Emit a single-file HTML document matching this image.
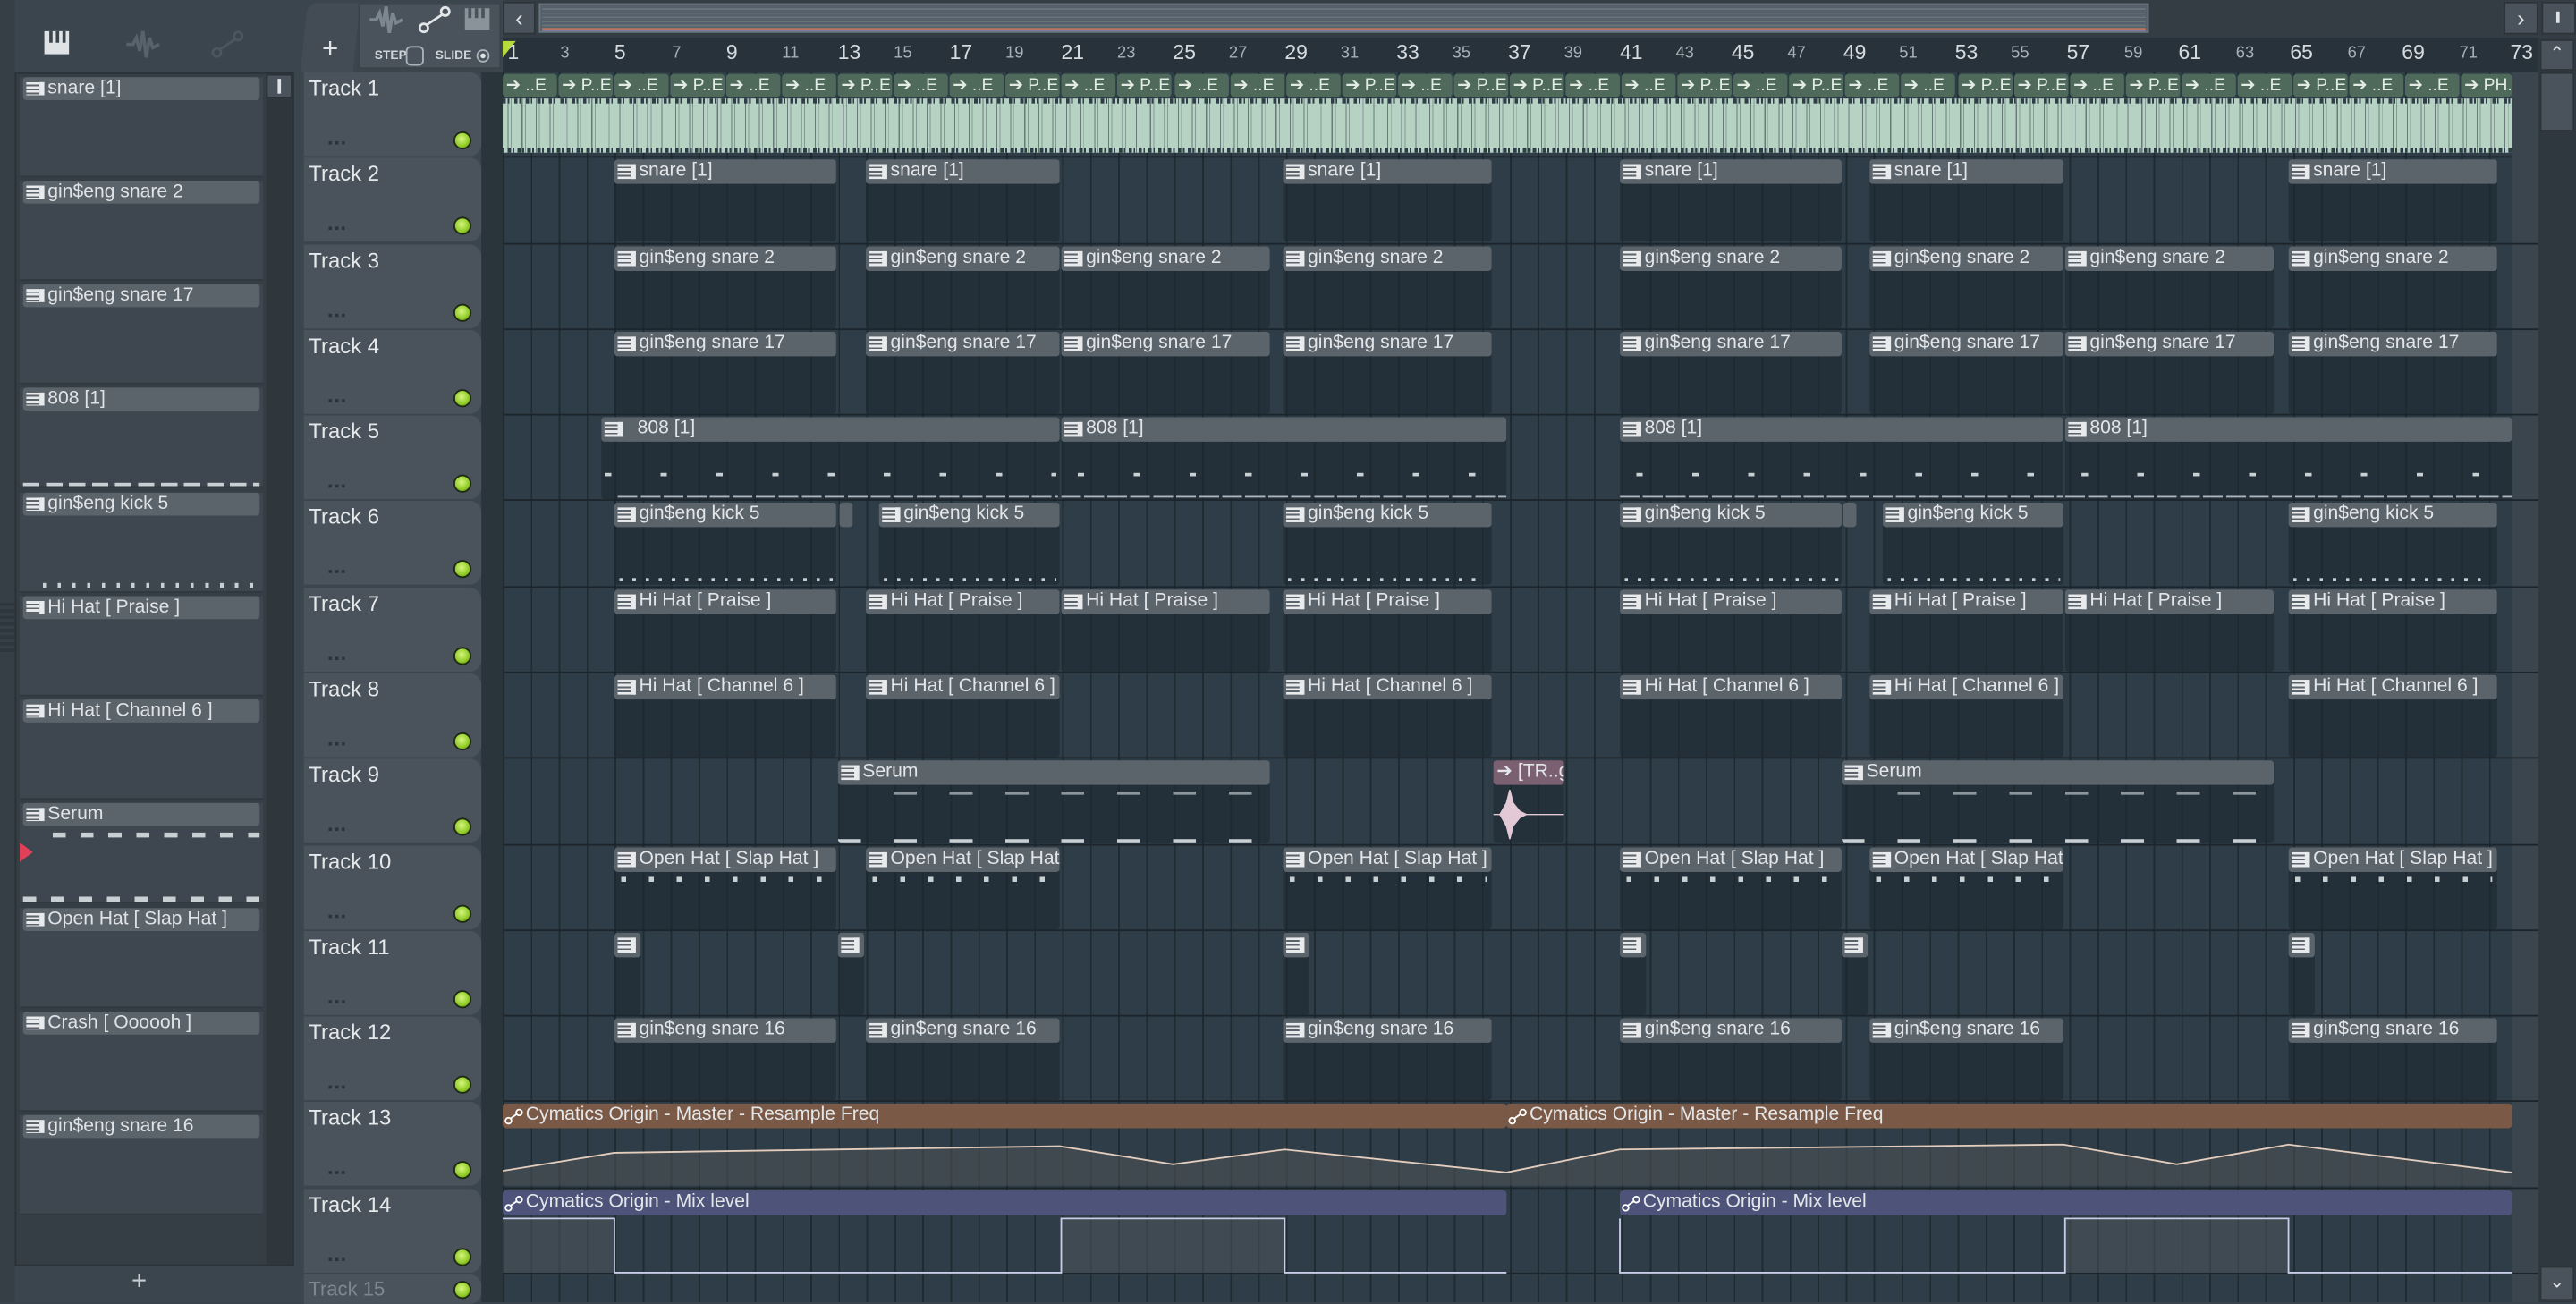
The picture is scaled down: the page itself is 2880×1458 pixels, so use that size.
<!DOCTYPE html>
<html><head><meta charset="utf-8"><style>
*{margin:0;padding:0;box-sizing:border-box}
html,body{width:2880px;height:1456px;overflow:hidden;background:#39434b}
#s{position:absolute;left:0;top:0;width:1568px;height:793px;transform:scale(1.83673,1.83607);transform-origin:0 0;background:#3b454d;font-family:"Liberation Sans Narrow","Liberation Sans",sans-serif;color:#dfe3e6}
.a{position:absolute}
#grid{position:absolute;left:306px;top:44px;width:1239px;height:749px;background-color:#2e3d47;background-image:repeating-linear-gradient(90deg,#1f2a31 0 1px,transparent 1px 17.03px);}
.r{position:absolute;left:306px;width:1239px;height:52.27px;border-bottom:1px solid #1c252b}
.c{position:absolute;top:1px;height:50px;background:rgba(28,38,45,.55);border-radius:2px;overflow:hidden}
.c b{display:block;height:15px;background:#5b636b;border-radius:2px;color:#e3e6e8;font-weight:normal;font-size:11.5px;line-height:15px;padding-left:15px;white-space:nowrap;overflow:hidden;position:relative}
.c b:before{content:"";position:absolute;left:2px;top:3px;width:8px;height:9px;background:#e8eaec;background-image:repeating-linear-gradient(180deg,#e8eaec 0 1.5px,#5b636b 1.5px 2.5px);border-right:3px solid #e8eaec}
.c b.x:before{display:none}
.h{position:absolute;left:185px;width:108px;height:51px;background:#4a535b;border-radius:0 7px 7px 0;font-size:13px;padding:2px 0 0 3px;color:#e6e9eb}
.h i{position:absolute;right:6px;top:36px;width:11px;height:11px;border-radius:50%;background:radial-gradient(circle at 45% 40%,#d8f580,#8fcb25 60%,#4f7a10);border:1px solid #1f2a14}
.h u{position:absolute;left:15px;top:42px;width:12px;height:2px;text-decoration:none;background:repeating-linear-gradient(90deg,#2b333a 0 2px,transparent 2px 4px)}
.it{position:absolute;left:12px;width:148px;height:61px;background:#3e474f;border-bottom:1px solid #30383f}
.it b{display:block;height:14px;background:#5b636b;border-radius:2px;font-weight:normal;font-size:11.5px;line-height:14px;padding-left:15px;white-space:nowrap;overflow:hidden;position:relative;margin:0 2px}
.it b:before{content:"";position:absolute;left:2px;top:3px;width:8px;height:8px;background-image:repeating-linear-gradient(180deg,#e8eaec 0 1.5px,#5b636b 1.5px 2.5px);border-right:3px solid #e8eaec}
.n{position:absolute;top:27px;font-size:10px;color:#a8b1b8}
.n.m{font-size:12.5px;top:25px;color:#d6dbdf}
.sg{position:absolute;top:1px;height:14px;width:33px;background:#4f6a5a;border-radius:2px;font-size:10.5px;line-height:14px;color:#e2ebe5;padding-left:2px;white-space:nowrap;overflow:hidden}
.d{position:absolute;height:2px;background:#c9d0d4}
</style></head><body><div id="s">

<div class="a" style="left:0;top:0;width:9px;height:793px;background:#363f46"></div>
<div class="a" style="left:9px;top:0;width:169px;height:44px;background:#3b454d"></div>
<div class="a" style="left:9px;top:44px;width:170px;height:727px;background:#353e45;border:1px solid #2a3238"></div>
<div class="a" style="left:27px;top:19px;width:15px;height:14px;background:#dfe3e6"></div>
<div class="a" style="left:30px;top:19px;width:2px;height:7px;background:#3b454d"></div>
<div class="a" style="left:34px;top:19px;width:2px;height:7px;background:#3b454d"></div>
<div class="a" style="left:38px;top:19px;width:2px;height:7px;background:#3b454d"></div>
<svg class="a" style="left:76px;top:18px" width="22" height="18"><path d="M1 9 L5 9 L7 5 L9 13 L11 1 L13 17 L15 5 L17 11 L21 9" stroke="#57626b" stroke-width="2" fill="none"/></svg>
<svg class="a" style="left:128px;top:18px" width="22" height="18"><circle cx="4" cy="14" r="2.5" stroke="#4c565e" fill="none" stroke-width="1.5"/><circle cx="17" cy="4" r="2.5" stroke="#4c565e" fill="none" stroke-width="1.5"/><path d="M6 12 L15 6" stroke="#4c565e" stroke-width="1.5"/></svg>
<div class="a" style="left:162px;top:45px;width:16px;height:725px;background:#2f373d"></div>
<div class="a" style="left:162px;top:45px;width:16px;height:15px;background:#4a535b;border:1px solid #2a3137"></div>
<div class="a" style="left:169px;top:48px;width:2px;height:9px;background:#dfe3e6"></div>
<div class="a" style="left:0;top:367px;width:9px;height:30px;background:repeating-linear-gradient(180deg,#2b3339 0 2px,transparent 2px 4px);opacity:.7"></div>

<div class="it" style="top:47px"><b>snare [1]</b></div>
<div class="it" style="top:110px"><b>gin$eng snare 2</b></div>
<div class="it" style="top:173px"><b>gin$eng snare 17</b></div>
<div class="it" style="top:236px"><b>808 [1]</b><div class="a" style="left:2px;top:58px;width:144px;height:2px;background:repeating-linear-gradient(90deg,#c9d0d4 0 10px,transparent 10px 14px)"></div></div>
<div class="it" style="top:300px"><b>gin$eng kick 5</b><div class="a" style="left:14px;top:55px;width:132px;height:3px;background:repeating-linear-gradient(90deg,#c9d0d4 0 2px,transparent 2px 9px)"></div></div>
<div class="it" style="top:363px"><b>Hi Hat [ Praise ]</b></div>
<div class="it" style="top:426px"><b>Hi Hat [ Channel 6 ]</b></div>
<div class="it" style="top:489px"><b>Serum</b><div class="a" style="left:20px;top:18px;width:126px;height:3px;background:repeating-linear-gradient(90deg,#c9d0d4 0 8px,transparent 8px 17px)"></div><div class="a" style="left:2px;top:57px;width:144px;height:3px;background:repeating-linear-gradient(90deg,#c9d0d4 0 8px,transparent 8px 17px)"></div><div class="a" style="left:0;top:24px;width:0;height:0;border-left:8px solid #e0405a;border-top:6px solid transparent;border-bottom:6px solid transparent"></div></div>
<div class="it" style="top:553px"><b>Open Hat [ Slap Hat ]</b></div>
<div class="it" style="top:616px"><b>Crash [ Oooooh ]</b></div>
<div class="it" style="top:679px"><b>gin$eng snare 16</b></div>
<div class="a" style="left:80px;top:772px;font-size:16px;color:#c8ced3">+</div>

<div class="a" style="left:185px;top:2px;width:32px;height:42px;background:#434c54;border-radius:6px 0 0 0;transform:skewX(-6deg)"></div>
<div class="a" style="left:196px;top:20px;font-size:17px;color:#e0e4e7">+</div>
<div class="a" style="left:218px;top:2px;width:87px;height:40px;background:#4a535b;border:1px solid #3a4249"></div>
<svg class="a" style="left:224px;top:3px" width="22" height="18"><path d="M1 9 L5 9 L7 5 L9 13 L11 1 L13 17 L15 5 L17 11 L21 9" stroke="#7c868e" stroke-width="2" fill="none"/></svg>
<svg class="a" style="left:254px;top:3px" width="22" height="18"><circle cx="4" cy="14" r="2.5" stroke="#e3e6e8" fill="none" stroke-width="1.5"/><circle cx="17" cy="4" r="2.5" stroke="#e3e6e8" fill="none" stroke-width="1.5"/><path d="M6 12 L15 6" stroke="#e3e6e8" stroke-width="1.5"/></svg>
<div class="a" style="left:283px;top:5px;width:15px;height:13px;background:#8a939a"></div>
<div class="a" style="left:285px;top:5px;width:2px;height:6px;background:#4a535b"></div>
<div class="a" style="left:289px;top:5px;width:2px;height:6px;background:#4a535b"></div>
<div class="a" style="left:293px;top:5px;width:2px;height:6px;background:#4a535b"></div>
<div class="a" style="left:228px;top:29px;font-size:7.5px;font-weight:bold;color:#cfd5da">STEP</div>
<div class="a" style="left:247px;top:28px;width:11px;height:12px;border:1.5px solid #aab3ba;border-radius:3px"></div>
<div class="a" style="left:265px;top:29px;font-size:7.5px;font-weight:bold;color:#cfd5da">SLIDE</div>
<div class="a" style="left:290px;top:30px;width:8px;height:8px;border:1px solid #aab3ba;border-radius:50%;background:radial-gradient(#dfe3e6 30%,#4a535b 40%)"></div>

<div class="a" style="left:306px;top:0;width:1262px;height:23px;background:#343d44"></div>
<div class="a" style="left:306px;top:1px;width:20px;height:20px;background:#4a535b;border:1px solid #2c3439;font-size:14px;line-height:18px;text-align:center;color:#dfe3e6">&lsaquo;</div>
<div class="a" style="left:328px;top:2px;width:980px;height:18px;background:#55606a;border:1px solid #6a757e"></div>
<div class="a" style="left:330px;top:5px;width:976px;height:12px;background:repeating-linear-gradient(180deg,#7b868e 0 1px,transparent 1px 2.5px);opacity:.5"></div>
<div class="a" style="left:330px;top:17px;width:976px;height:1px;background:#b8775a"></div>
<div class="a" style="left:330px;top:18px;width:976px;height:1px;background:#7a80a8"></div>
<div class="a" style="left:1524px;top:1px;width:21px;height:20px;background:#4a535b;border:1px solid #2c3439;font-size:14px;line-height:18px;text-align:center;color:#dfe3e6">&rsaquo;</div>
<div class="a" style="left:1547px;top:1px;width:21px;height:20px;background:#4a535b;border:1px solid #2c3439"></div>
<div class="a" style="left:1556px;top:7px;width:2px;height:7px;background:#dfe3e6"></div>

<div class="a" style="left:306px;top:23px;width:1239px;height:21px;background:#28323a"></div>
<div class="a" style="left:306px;top:25px;width:0;height:0;border-left:8px solid #b8dc3c;border-bottom:10px solid transparent"></div>
<span class="n m" style="left:309px">1</span><span class="n" style="left:341px">3</span><span class="n m" style="left:374px">5</span><span class="n" style="left:409px">7</span><span class="n m" style="left:442px">9</span><span class="n" style="left:476px">11</span><span class="n m" style="left:510px">13</span><span class="n" style="left:544px">15</span><span class="n m" style="left:578px">17</span><span class="n" style="left:612px">19</span><span class="n m" style="left:646px">21</span><span class="n" style="left:680px">23</span><span class="n m" style="left:714px">25</span><span class="n" style="left:748px">27</span><span class="n m" style="left:782px">29</span><span class="n" style="left:816px">31</span><span class="n m" style="left:850px">33</span><span class="n" style="left:884px">35</span><span class="n m" style="left:918px">37</span><span class="n" style="left:952px">39</span><span class="n m" style="left:986px">41</span><span class="n" style="left:1020px">43</span><span class="n m" style="left:1054px">45</span><span class="n" style="left:1088px">47</span><span class="n m" style="left:1122px">49</span><span class="n" style="left:1156px">51</span><span class="n m" style="left:1190px">53</span><span class="n" style="left:1224px">55</span><span class="n m" style="left:1258px">57</span><span class="n" style="left:1293px">59</span><span class="n m" style="left:1326px">61</span><span class="n" style="left:1361px">63</span><span class="n m" style="left:1394px">65</span><span class="n" style="left:1429px">67</span><span class="n m" style="left:1462px">69</span><span class="n" style="left:1497px">71</span><span class="n m" style="left:1528px">73</span>

<div class="a" style="left:1545px;top:23px;width:23px;height:770px;background:#2f383e"></div>
<div class="a" style="left:1546px;top:24px;width:21px;height:19px;background:#4a535b;border:1px solid #2c3439;font-size:11px;line-height:17px;text-align:center;color:#dfe3e6">&#8963;</div>
<div class="a" style="left:1546px;top:44px;width:21px;height:36px;background:#4a535b;border:1px solid #2c3439"></div>
<div class="a" style="left:1546px;top:771px;width:21px;height:21px;background:#4a535b;border:1px solid #2c3439;font-size:11px;line-height:19px;text-align:center;color:#dfe3e6">&#8964;</div>

<div class="a" style="left:293px;top:44px;width:13px;height:749px;background:#2a343b"></div>

<div id="grid" style="width:1223px"></div>

<div class="h" style="top:44.1px">Track 1<u></u><i></i></div>
<div class="h" style="top:96.4px">Track 2<u></u><i></i></div>
<div class="h" style="top:148.6px">Track 3<u></u><i></i></div>
<div class="h" style="top:200.9px">Track 4<u></u><i></i></div>
<div class="h" style="top:253.2px">Track 5<u></u><i></i></div>
<div class="h" style="top:305.4px">Track 6<u></u><i></i></div>
<div class="h" style="top:357.7px">Track 7<u></u><i></i></div>
<div class="h" style="top:410px">Track 8<u></u><i></i></div>
<div class="h" style="top:462.3px">Track 9<u></u><i></i></div>
<div class="h" style="top:514.5px">Track 10<u></u><i></i></div>
<div class="h" style="top:566.8px">Track 11<u></u><i></i></div>
<div class="h" style="top:619.1px">Track 12<u></u><i></i></div>
<div class="h" style="top:671.3px">Track 13<u></u><i></i></div>
<div class="h" style="top:723.6px">Track 14<u></u><i></i></div>
<div class="h" style="top:775.9px;height:18px;color:#7d878f;font-size:12px">Track 15<i style="top:4px"></i></div>

<div class="r" style="top:44.1px;width:1223px">
<div class="a" style="left:0;top:16px;width:1223px;height:33px;background:#b6d2c3;background-image:repeating-linear-gradient(90deg,transparent 0 3px,rgba(40,52,58,.55) 3px 3.6px,transparent 3.6px 5px,rgba(40,52,58,.35) 5px 5.5px,transparent 5.5px 8.5px)"></div>
<div class="a" style="left:0;top:16px;width:1223px;height:3px;background:repeating-linear-gradient(90deg,#2e3d47 0 2px,transparent 2px 3px,#2e3d47 3px 4px,transparent 4px 7px)"></div>
<div class="a" style="left:0;top:46px;width:1223px;height:3px;background:repeating-linear-gradient(90deg,#2e3d47 0 1px,transparent 1px 3px,#2e3d47 3px 5px,transparent 5px 6px)"></div>
<div class="sg" style="left:0">➔ ..E</div><div class="sg" style="left:34px">➔ P..E</div><div class="sg" style="left:68px">➔ ..E</div><div class="sg" style="left:102px">➔ P..E</div><div class="sg" style="left:136px">➔ ..E</div><div class="sg" style="left:170px">➔ ..E</div><div class="sg" style="left:204px">➔ P..E</div><div class="sg" style="left:238px">➔ ..E</div><div class="sg" style="left:272px">➔ ..E</div><div class="sg" style="left:306px">➔ P..E</div><div class="sg" style="left:340px">➔ ..E</div><div class="sg" style="left:374px">➔ P..E</div><div class="sg" style="left:409px">➔ ..E</div><div class="sg" style="left:443px">➔ ..E</div><div class="sg" style="left:477px">➔ ..E</div><div class="sg" style="left:511px">➔ P..E</div><div class="sg" style="left:545px">➔ ..E</div><div class="sg" style="left:579px">➔ P..E</div><div class="sg" style="left:613px">➔ P..E</div><div class="sg" style="left:647px">➔ ..E</div><div class="sg" style="left:681px">➔ ..E</div><div class="sg" style="left:715px">➔ P..E</div><div class="sg" style="left:749px">➔ ..E</div><div class="sg" style="left:783px">➔ P..E</div><div class="sg" style="left:817px">➔ ..E</div><div class="sg" style="left:851px">➔ ..E</div><div class="sg" style="left:886px">➔ P..E</div><div class="sg" style="left:920px">➔ P..E</div><div class="sg" style="left:954px">➔ ..E</div><div class="sg" style="left:988px">➔ P..E</div><div class="sg" style="left:1022px">➔ ..E</div><div class="sg" style="left:1056px">➔ ..E</div><div class="sg" style="left:1090px">➔ P..E</div><div class="sg" style="left:1124px">➔ ..E</div><div class="sg" style="left:1158px">➔ ..E</div><div class="sg" style="left:1192px;width:31px">➔ PH.._E</div>
</div>

<div class="r" style="top:96.4px">
<div class="c" style="left:68px;width:135px"><b>snare [1]</b></div>
<div class="c" style="left:221px;width:118px"><b>snare [1]</b></div>
<div class="c" style="left:475px;width:127px"><b>snare [1]</b></div>
<div class="c" style="left:680px;width:135px"><b>snare [1]</b></div>
<div class="c" style="left:832px;width:118px"><b>snare [1]</b></div>
<div class="c" style="left:1087px;width:127px"><b>snare [1]</b></div>
</div>
<div class="r" style="top:148.6px">
<div class="c" style="left:68px;width:135px"><b>gin$eng snare 2</b></div>
<div class="c" style="left:221px;width:118px"><b>gin$eng snare 2</b></div>
<div class="c" style="left:340px;width:127px"><b>gin$eng snare 2</b></div>
<div class="c" style="left:475px;width:127px"><b>gin$eng snare 2</b></div>
<div class="c" style="left:680px;width:135px"><b>gin$eng snare 2</b></div>
<div class="c" style="left:832px;width:118px"><b>gin$eng snare 2</b></div>
<div class="c" style="left:951px;width:127px"><b>gin$eng snare 2</b></div>
<div class="c" style="left:1087px;width:127px"><b>gin$eng snare 2</b></div>
</div>
<div class="r" style="top:200.9px">
<div class="c" style="left:68px;width:135px"><b>gin$eng snare 17</b></div>
<div class="c" style="left:221px;width:118px"><b>gin$eng snare 17</b></div>
<div class="c" style="left:340px;width:127px"><b>gin$eng snare 17</b></div>
<div class="c" style="left:475px;width:127px"><b>gin$eng snare 17</b></div>
<div class="c" style="left:680px;width:135px"><b>gin$eng snare 17</b></div>
<div class="c" style="left:832px;width:118px"><b>gin$eng snare 17</b></div>
<div class="c" style="left:951px;width:127px"><b>gin$eng snare 17</b></div>
<div class="c" style="left:1087px;width:127px"><b>gin$eng snare 17</b></div>
</div>
<div class="r" style="top:253.2px">
<div class="c" style="left:60px;width:279px"><b style="padding-left:22px">808 [1]</b><div class="d" style="left:2px;top:34px;width:275px;background:repeating-linear-gradient(90deg,#c9d0d4 0 4px,transparent 4px 34px)"></div><div class="d" style="left:10px;top:48px;width:268px;height:1px;background:repeating-linear-gradient(90deg,#aeb6bc 0 12px,transparent 12px 14px)"></div></div>
<div class="c" style="left:340px;width:271px"><b>808 [1]</b><div class="d" style="left:10px;top:34px;width:260px;background:repeating-linear-gradient(90deg,#c9d0d4 0 4px,transparent 4px 34px)"></div><div class="d" style="left:0;top:48px;width:271px;height:1px;background:repeating-linear-gradient(90deg,#aeb6bc 0 12px,transparent 12px 14px)"></div></div>
<div class="c" style="left:680px;width:270px"><b>808 [1]</b><div class="d" style="left:10px;top:34px;width:260px;background:repeating-linear-gradient(90deg,#c9d0d4 0 4px,transparent 4px 34px)"></div><div class="d" style="left:0;top:48px;width:270px;height:1px;background:repeating-linear-gradient(90deg,#aeb6bc 0 12px,transparent 12px 14px)"></div></div>
<div class="c" style="left:951px;width:272px"><b>808 [1]</b><div class="d" style="left:10px;top:34px;width:260px;background:repeating-linear-gradient(90deg,#c9d0d4 0 4px,transparent 4px 34px)"></div><div class="d" style="left:0;top:48px;width:272px;height:1px;background:repeating-linear-gradient(90deg,#aeb6bc 0 12px,transparent 12px 14px)"></div></div>
</div>
<div class="r" style="top:305.4px">
<div class="c" style="left:68px;width:135px"><b>gin$eng kick 5</b><div class="d" style="left:3px;top:46px;width:130px;background:repeating-linear-gradient(90deg,#c9d0d4 0 2px,transparent 2px 8px)"></div></div>
<div class="c" style="left:205px;width:8px;background:#5b636b;height:15px"></div>
<div class="c" style="left:229px;width:110px"><b>gin$eng kick 5</b><div class="d" style="left:3px;top:46px;width:105px;background:repeating-linear-gradient(90deg,#c9d0d4 0 2px,transparent 2px 8px)"></div></div>
<div class="c" style="left:475px;width:127px"><b>gin$eng kick 5</b><div class="d" style="left:3px;top:46px;width:120px;background:repeating-linear-gradient(90deg,#c9d0d4 0 2px,transparent 2px 8px)"></div></div>
<div class="c" style="left:680px;width:135px"><b>gin$eng kick 5</b><div class="d" style="left:3px;top:46px;width:130px;background:repeating-linear-gradient(90deg,#c9d0d4 0 2px,transparent 2px 8px)"></div></div>
<div class="c" style="left:816px;width:8px;background:#5b636b;height:15px"></div>
<div class="c" style="left:840px;width:110px"><b>gin$eng kick 5</b><div class="d" style="left:3px;top:46px;width:105px;background:repeating-linear-gradient(90deg,#c9d0d4 0 2px,transparent 2px 8px)"></div></div>
<div class="c" style="left:1087px;width:127px"><b>gin$eng kick 5</b><div class="d" style="left:3px;top:46px;width:120px;background:repeating-linear-gradient(90deg,#c9d0d4 0 2px,transparent 2px 8px)"></div></div>
</div>
<div class="r" style="top:357.7px">
<div class="c" style="left:68px;width:135px"><b>Hi Hat [ Praise ]</b></div>
<div class="c" style="left:221px;width:118px"><b>Hi Hat [ Praise ]</b></div>
<div class="c" style="left:340px;width:127px"><b>Hi Hat [ Praise ]</b></div>
<div class="c" style="left:475px;width:127px"><b>Hi Hat [ Praise ]</b></div>
<div class="c" style="left:680px;width:135px"><b>Hi Hat [ Praise ]</b></div>
<div class="c" style="left:832px;width:118px"><b>Hi Hat [ Praise ]</b></div>
<div class="c" style="left:951px;width:127px"><b>Hi Hat [ Praise ]</b></div>
<div class="c" style="left:1087px;width:127px"><b>Hi Hat [ Praise ]</b></div>
</div>
<div class="r" style="top:410px">
<div class="c" style="left:68px;width:135px"><b>Hi Hat [ Channel 6 ]</b></div>
<div class="c" style="left:221px;width:118px"><b>Hi Hat [ Channel 6 ]</b></div>
<div class="c" style="left:475px;width:127px"><b>Hi Hat [ Channel 6 ]</b></div>
<div class="c" style="left:680px;width:135px"><b>Hi Hat [ Channel 6 ]</b></div>
<div class="c" style="left:832px;width:118px"><b>Hi Hat [ Channel 6 ]</b></div>
<div class="c" style="left:1087px;width:127px"><b>Hi Hat [ Channel 6 ]</b></div>
</div>
<div class="r" style="top:462.3px">
<div class="c" style="left:204px;width:263px"><b>Serum</b><div class="d" style="left:34px;top:19px;width:229px;background:repeating-linear-gradient(90deg,#8d969c 0 14px,transparent 14px 34px)"></div><div class="d" style="left:0;top:48px;width:263px;background:repeating-linear-gradient(90deg,#c9d0d4 0 14px,transparent 14px 34px)"></div></div>
<div class="c" style="left:603px;width:43px;background:rgba(28,38,45,.5)"><b class="x" style="background:#7a6070;padding-left:2px">➔ [TR..g</b><svg class="a" style="left:0;top:16px" width="43" height="34"><path d="M0 17 L4 17 L8 10 L10 2 L12 10 L16 15 L20 17 L43 17 L20 17 L16 19 L12 24 L10 32 L8 24 L4 17Z" fill="#e3c8d6" stroke="#e3c8d6" stroke-width="0.8"/></svg></div>
<div class="c" style="left:815px;width:263px"><b>Serum</b><div class="d" style="left:34px;top:19px;width:229px;background:repeating-linear-gradient(90deg,#8d969c 0 14px,transparent 14px 34px)"></div><div class="d" style="left:0;top:48px;width:263px;background:repeating-linear-gradient(90deg,#c9d0d4 0 14px,transparent 14px 34px)"></div></div>
</div>
<div class="r" style="top:514.5px">
<div class="c" style="left:68px;width:135px"><b>Open Hat [ Slap Hat ]</b><div class="d" style="left:4px;top:18px;width:130px;height:3px;background:repeating-linear-gradient(90deg,#c9d0d4 0 3px,transparent 3px 17px)"></div></div>
<div class="c" style="left:221px;width:118px"><b>Open Hat [ Slap Hat ]</b><div class="d" style="left:4px;top:18px;width:112px;height:3px;background:repeating-linear-gradient(90deg,#c9d0d4 0 3px,transparent 3px 17px)"></div></div>
<div class="c" style="left:475px;width:127px"><b>Open Hat [ Slap Hat ]</b><div class="d" style="left:4px;top:18px;width:120px;height:3px;background:repeating-linear-gradient(90deg,#c9d0d4 0 3px,transparent 3px 17px)"></div></div>
<div class="c" style="left:680px;width:135px"><b>Open Hat [ Slap Hat ]</b><div class="d" style="left:4px;top:18px;width:130px;height:3px;background:repeating-linear-gradient(90deg,#c9d0d4 0 3px,transparent 3px 17px)"></div></div>
<div class="c" style="left:832px;width:118px"><b>Open Hat [ Slap Hat ]</b><div class="d" style="left:4px;top:18px;width:112px;height:3px;background:repeating-linear-gradient(90deg,#c9d0d4 0 3px,transparent 3px 17px)"></div></div>
<div class="c" style="left:1087px;width:127px"><b>Open Hat [ Slap Hat ]</b><div class="d" style="left:4px;top:18px;width:120px;height:3px;background:repeating-linear-gradient(90deg,#c9d0d4 0 3px,transparent 3px 17px)"></div></div>
</div>
<div class="r" style="top:566.8px">
<div class="c" style="left:68px;width:16px"><b></b></div>
<div class="c" style="left:204px;width:16px"><b></b></div>
<div class="c" style="left:475px;width:16px"><b></b></div>
<div class="c" style="left:680px;width:16px"><b></b></div>
<div class="c" style="left:815px;width:16px"><b></b></div>
<div class="c" style="left:1087px;width:16px"><b></b></div>
</div>
<div class="r" style="top:619.1px">
<div class="c" style="left:68px;width:135px"><b>gin$eng snare 16</b></div>
<div class="c" style="left:221px;width:118px"><b>gin$eng snare 16</b></div>
<div class="c" style="left:475px;width:127px"><b>gin$eng snare 16</b></div>
<div class="c" style="left:680px;width:135px"><b>gin$eng snare 16</b></div>
<div class="c" style="left:832px;width:118px"><b>gin$eng snare 16</b></div>
<div class="c" style="left:1087px;width:127px"><b>gin$eng snare 16</b></div>
</div>
<div class="r" style="top:671.3px">
<svg class="a" style="left:0;top:0" width="1223" height="52"><path d="M0 42 L68 31 L339 27 L408 38 L476 29 L611 43 L680 29 L950 26 L1019 38 L1087 26 L1223 43 L1223 51 L0 51Z" fill="rgba(80,84,86,.55)"/><path d="M0 42 L68 31 L339 27 L408 38 L476 29 L611 43 L680 29 L950 26 L1019 38 L1087 26 L1223 43" fill="none" stroke="#e4cdbd" stroke-width="1"/></svg>
<div class="c" style="left:0;width:611px;height:15px;background:#7a5a47"><b class="x" style="background:#7a5a47;padding-left:14px">Cymatics Origin - Master - Resample Freq</b></div>
<div class="c" style="left:611px;width:612px;height:15px;background:#7a5a47"><b class="x" style="background:#7a5a47;padding-left:14px">Cymatics Origin - Master - Resample Freq</b></div>
<svg class="a" style="left:1px;top:4px" width="12" height="10"><circle cx="2.5" cy="7.5" r="1.8" stroke="#fff" fill="none"/><circle cx="9" cy="2.5" r="1.8" stroke="#fff" fill="none"/><path d="M4 6 L7.5 3.5" stroke="#fff"/></svg>
<svg class="a" style="left:612px;top:4px" width="12" height="10"><circle cx="2.5" cy="7.5" r="1.8" stroke="#fff" fill="none"/><circle cx="9" cy="2.5" r="1.8" stroke="#fff" fill="none"/><path d="M4 6 L7.5 3.5" stroke="#fff"/></svg>
</div>
<div class="r" style="top:723.6px">
<svg class="a" style="left:0;top:0" width="1223" height="52"><rect x="0" y="18" width="68" height="33" fill="rgba(80,88,96,.5)"/><rect x="340" y="18" width="136" height="33" fill="rgba(80,88,96,.5)"/><rect x="951" y="18" width="136" height="33" fill="rgba(80,88,96,.5)"/><path d="M0 18 L68 18 L68 51 L340 51 L340 18 L476 18 L476 51 L611 51" fill="none" stroke="#c8cde8" stroke-width="1"/><path d="M680 18 L680 51 L951 51 L951 18 L1087 18 L1087 51 L1223 51" fill="none" stroke="#c8cde8" stroke-width="1"/></svg>
<div class="c" style="left:0;width:611px;height:15px;background:#4e5479"><b class="x" style="background:#4e5479;padding-left:14px">Cymatics Origin - Mix level</b></div>
<div class="c" style="left:680px;width:543px;height:15px;background:#4e5479"><b class="x" style="background:#4e5479;padding-left:14px">Cymatics Origin - Mix level</b></div>
<svg class="a" style="left:1px;top:4px" width="12" height="10"><circle cx="2.5" cy="7.5" r="1.8" stroke="#fff" fill="none"/><circle cx="9" cy="2.5" r="1.8" stroke="#fff" fill="none"/><path d="M4 6 L7.5 3.5" stroke="#fff"/></svg>
<svg class="a" style="left:681px;top:4px" width="12" height="10"><circle cx="2.5" cy="7.5" r="1.8" stroke="#fff" fill="none"/><circle cx="9" cy="2.5" r="1.8" stroke="#fff" fill="none"/><path d="M4 6 L7.5 3.5" stroke="#fff"/></svg>
</div>

</div></body></html>
